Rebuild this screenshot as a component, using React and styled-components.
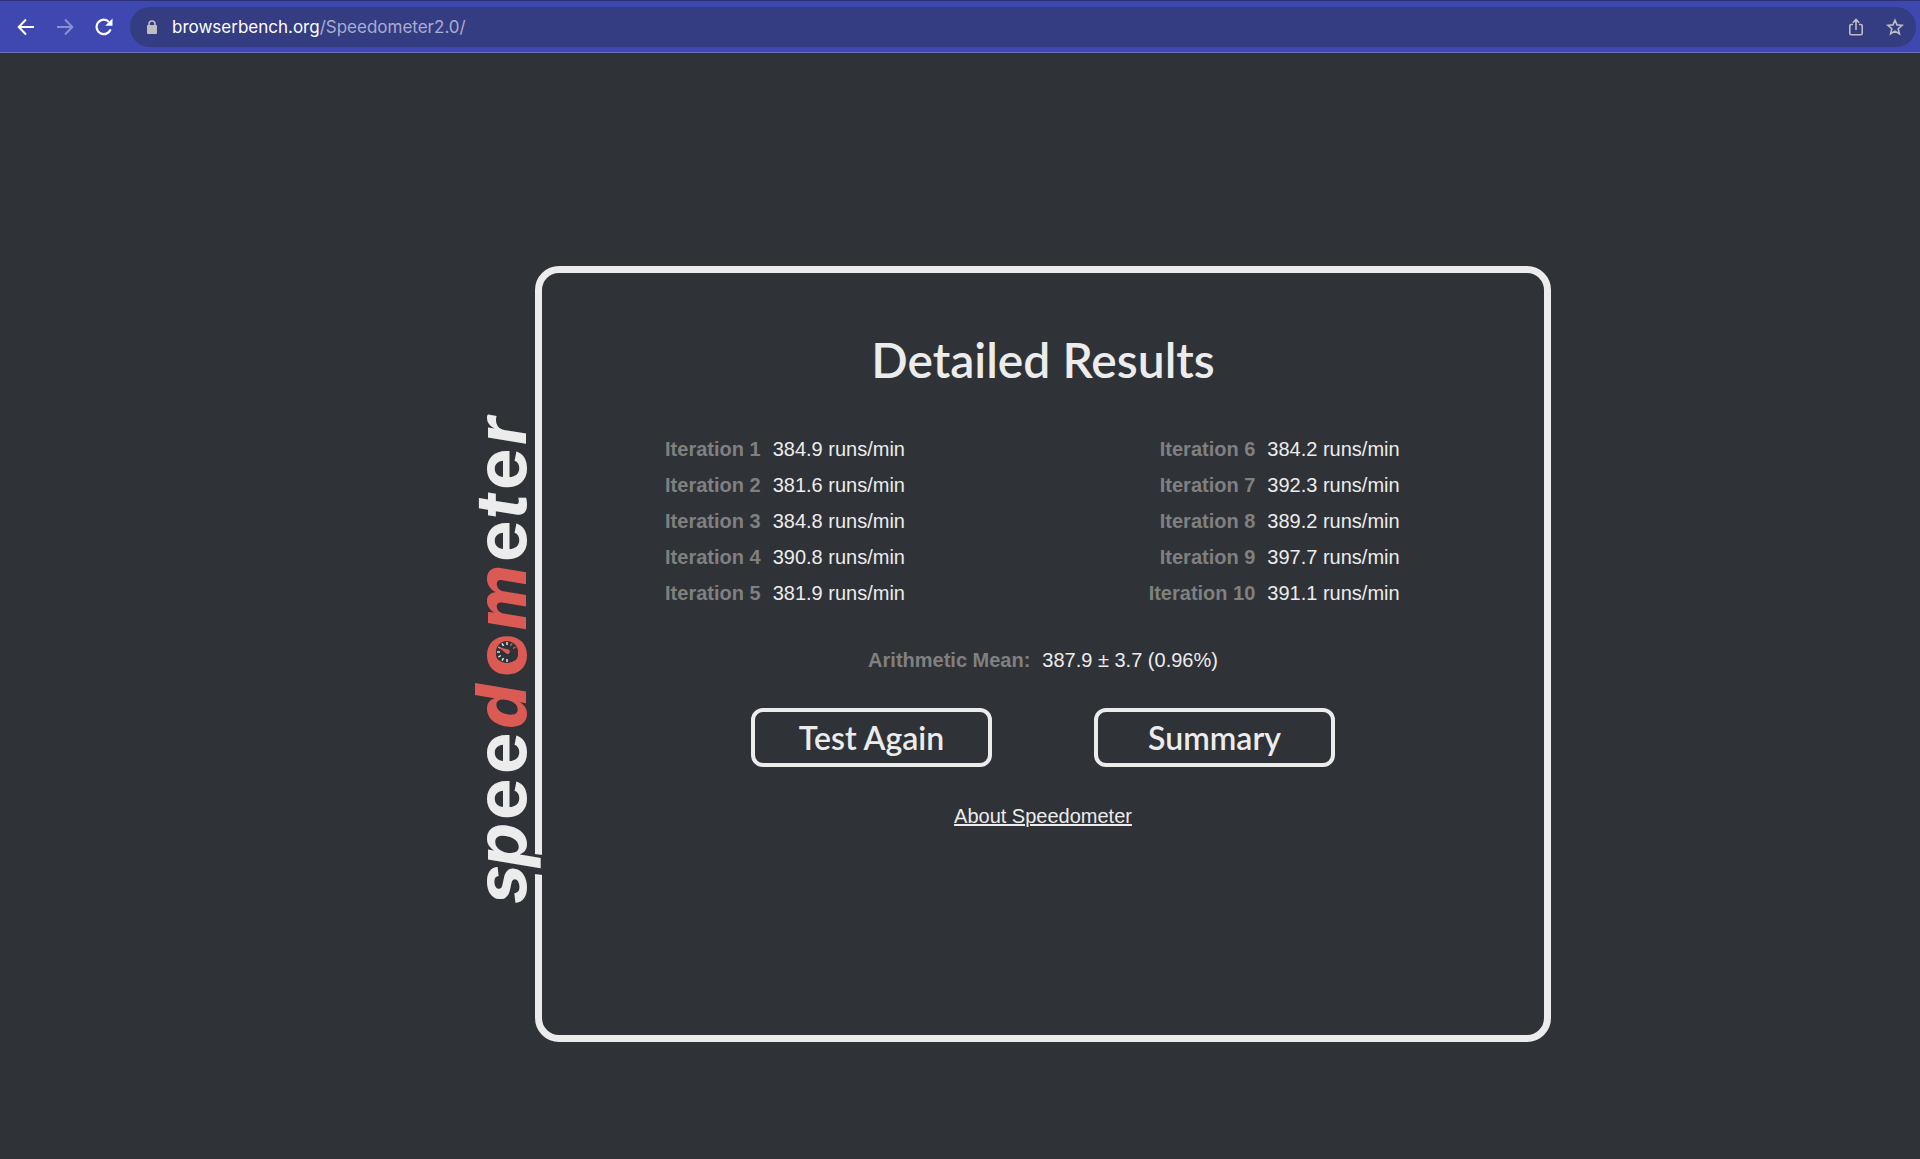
import React from "react";
import styled, { createGlobalStyle } from "styled-components";

const GlobalStyle = createGlobalStyle`
  *, *::before, *::after { box-sizing: border-box; }
  html { background: #2f3237; }
  body {
    margin: 0;
    color: #ececec;
    font: 20px/24px "Liberation Sans", Arial, sans-serif;
  }
`;

const Page = styled.div`
  min-height: 100vh;
  display: flex;
  flex-direction: column;
`;

const Toolbar = styled.header`
  display: flex;
  align-items: center;
  height: 53px;
  padding: 0 4px 0 12px;
  background: #3e48b0;
  border-top: 1px solid #2b3078;
  border-bottom: 1px solid #6870c0;
`;

const IconButton = styled.button`
  display: grid;
  place-items: center;
  width: 39px;
  height: 32px;
  padding: 0;
  border: 0;
  background: none;
  color: ${(p) => p.$color || "#ffffff"};
`;

const NavButtons = styled.nav`
  display: flex;
  margin-left: -6px;
  width: 124px;
`;

const AddressBar = styled.div`
  flex: 1;
  display: flex;
  align-items: center;
  height: 40px;
  padding: 0 2px 0 16px;
  border-radius: 20px;
  background: #343c82;
`;

const Address = styled.a`
  flex: 1;
  margin-left: 14px;
  font: 17px/24px Inter, Roboto, sans-serif;
  color: #a9acd0;
  text-decoration: none;
`;

const Host = styled.span`
  color: #ffffff;
`;

const Main = styled.main`
  flex: 1;
  display: flex;
  justify-content: center;
  align-items: flex-start;
  padding: 213px 0 60px 166px;
`;

const Panel = styled.section`
  position: relative;
  width: 1016px;
  max-width: 100%;
  min-height: 776px;
  padding: 55px 0 40px;
  display: flex;
  flex-direction: column;
  align-items: center;
  border: 7px solid #ececec;
  border-radius: 24px;
`;

const Logo = styled.svg`
  position: absolute;
  left: -86px;
  top: 137px;
  overflow: visible;
  font-family: Inter, sans-serif;
`;

const Slanted = styled.text`
  font-style: italic;
`;

const Title = styled.h1`
  margin: 0;
  font: 600 48px/64px Lato, sans-serif;
`;

const Results = styled.div`
  display: flex;
  justify-content: center;
  gap: 213px;
  margin-top: 39px;
`;

const Table = styled.table`
  border-collapse: collapse;
`;

const Label = styled.th`
  width: 117px;
  height: 36px;
  padding: 0 12px 0 0;
  text-align: right;
  white-space: nowrap;
  color: #808080;
`;

const Value = styled.td`
  width: 163px;
  padding: 0;
  white-space: nowrap;
`;

const Mean = styled.dl`
  display: flex;
  gap: 12px;
  margin: 37px 0 0;
  dt { font-weight: bold; color: #808080; }
  dd { margin: 0; }
`;

const Actions = styled.div`
  display: flex;
  gap: 102px;
  margin-top: 36px;
`;

const ActionButton = styled.button`
  width: 241px;
  height: 59px;
  padding: 0;
  border: 4px solid #ececec;
  border-radius: 12px;
  background: none;
  color: #ececec;
  font: 600 32px/40px Lato, sans-serif;
`;

const About = styled.a`
  margin-top: 37px;
  color: #ececec;
`;

const first = [
  ["1", "384.9"],
  ["2", "381.6"],
  ["3", "384.8"],
  ["4", "390.8"],
  ["5", "381.9"],
];
const second = [
  ["6", "384.2"],
  ["7", "392.3"],
  ["8", "389.2"],
  ["9", "397.7"],
  ["10", "391.1"],
];

function Iterations({ rows }) {
  return (
    <Table>
      <tbody>
        {rows.map(([n, score]) => (
          <tr key={n}>
            <Label scope="row">Iteration {n}</Label>
            <Value>{score} runs/min</Value>
          </tr>
        ))}
      </tbody>
    </Table>
  );
}

function Gauge() {
  const ticks = [-120, -90, -60, -30, 0, 30, 60, 90, 120];
  return (
    <g transform="translate(51 242)">
      <circle r="11" fill="#2f3237" />
      {ticks.map((a) => (
        <path
          key={a}
          d="M0 -10V-7"
          stroke={a >= 90 ? "#dc5a54" : "#ececec"}
          strokeWidth="1.4"
          transform={`rotate(${a - 60})`}
        />
      ))}
      <path d="M-9 -5L1.5 -2.5A2.4 2.4 0 0 1 0 2Z" fill="#dc5a54" />
    </g>
  );
}

function Wordmark() {
  return (
    <Logo width="94" height="494" viewBox="0 0 94 494" role="img" aria-label="speedometer">
      <path d="M78 444L87 445V465L78 464Z" fill="#2f3237" />
      <g transform="translate(70 492) rotate(-90)" fontSize="70" fontWeight="700" fill="#ececec">
        <Slanted x="-2">s</Slanted>
        <Slanted x="35">p</Slanted>
        <text x="82">e</text>
        <text x="128">e</text>
        <g fontWeight="800" fill="#dc5a54">
          <Slanted x="173">d</Slanted>
          <text x="225">o</text>
          <Slanted x="272">m</Slanted>
        </g>
        <text x="340">e</text>
        <Slanted x="383">t</Slanted>
        <text x="412">e</text>
        <Slanted x="457">r</Slanted>
      </g>
      <Gauge />
    </Logo>
  );
}

export default function App() {
  return (
    <Page>
      <GlobalStyle />
      <Toolbar>
        <NavButtons>
          <IconButton aria-label="Back">
            <svg width="18" height="18" viewBox="0 0 18 18" fill="none" stroke="currentColor" strokeWidth="2">
              <path d="M17 9H2M9 1.5L1.7 9L9 16.5" />
            </svg>
          </IconButton>
          <IconButton aria-label="Forward" $color="#8990d2">
            <svg width="18" height="18" viewBox="0 0 18 18" fill="none" stroke="currentColor" strokeWidth="2">
              <path d="M1 9H16M9 1.5L16.3 9L9 16.5" />
            </svg>
          </IconButton>
          <IconButton aria-label="Reload">
            <svg width="18" height="18" viewBox="0 0 18 18">
              <path d="M15.6 11.3A7.2 7.2 0 1 1 14 3.9" fill="none" stroke="currentColor" strokeWidth="2.2" />
              <path d="M17.5 0.5V7.8H10.2Z" fill="currentColor" />
            </svg>
          </IconButton>
        </NavButtons>
        <AddressBar>
          <svg width="12" height="14" viewBox="0 0 12 14">
            <path d="M3 6V4A3 3 0 0 1 9 4V6" fill="none" stroke="#bdbdbf" strokeWidth="1.6" />
            <rect x="1" y="5" width="10" height="9" rx="1" fill="#bdbdbf" />
          </svg>
          <Address href="#results">
            <Host>browserbench.org</Host>/Speedometer2.0/
          </Address>
          <IconButton aria-label="Share" $color="#bdbdbf">
            <svg width="16" height="18" viewBox="0 0 16 18" fill="none" stroke="currentColor" strokeWidth="1.6">
              <path d="M5 6.5H3Q1.8 6.5 1.8 7.7V15.5Q1.8 16.7 3 16.7H13Q14.2 16.7 14.2 15.5V7.7Q14.2 6.5 13 6.5H11M8 12V2M4.8 4.8L8 1.5L11.2 4.8" />
            </svg>
          </IconButton>
          <IconButton aria-label="Bookmark" $color="#bdbdbf">
            <svg width="18" height="18" viewBox="0 0 18 18" fill="none" stroke="currentColor" strokeWidth="1.6">
              <path d="M9 2.2L11 6.9L16.1 7.3L12.2 10.7L13.4 15.8L9 13.1L4.6 15.8L5.8 10.7L1.9 7.3L7 6.9Z" />
            </svg>
          </IconButton>
        </AddressBar>
      </Toolbar>
      <Main id="results">
        <Panel>
          <Wordmark />
          <Title>Detailed Results</Title>
          <Results>
            <Iterations rows={first} />
            <Iterations rows={second} />
          </Results>
          <Mean>
            <dt>Arithmetic Mean:</dt>
            <dd>387.9 ± 3.7 (0.96%)</dd>
          </Mean>
          <Actions>
            <ActionButton type="button">Test Again</ActionButton>
            <ActionButton type="button">Summary</ActionButton>
          </Actions>
          <About href="#about">About Speedometer</About>
        </Panel>
      </Main>
    </Page>
  );
}
